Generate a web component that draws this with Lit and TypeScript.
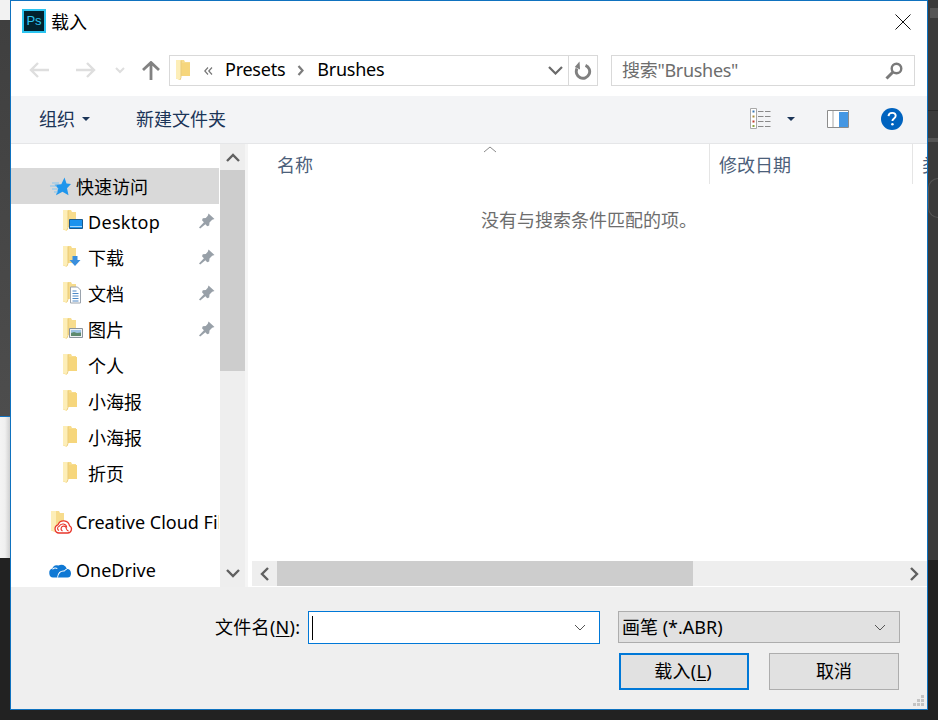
import { LitElement, html, css, svg } from "lit";
import { customElement } from "lit/decorators.js";

const folder = () => html`<svg class="folder" width="15" height="22" viewBox="0 0 15 22">
  <path d="M0 1h8l1 2h5v14H4v4l-4-1.500z" fill="#f7dc8d"/>
  <path d="M0 1h5v17l-1 3-4-1.500z" fill="#fdeeb8"/>
  <path d="M5 1.500v17l-1 2.500" fill="none" stroke="#e4c268" stroke-width=".8"/>
  <path d="M6 4h8v13H6z" fill="#f6d67c"/>
</svg>`;

const overlays: Record<string, ReturnType<typeof svg>> = {
  desktop: svg`<path d="M6.500 10.500h13v9h-13z" fill="#1b93ee" stroke="#1c5a8c" stroke-width="1"/><path d="M7 17.500h12" stroke="#a6d8fa"/>`,
  down: svg`<path d="M9.500 11h5v4h3l-5.500 6-5.500-6h3z" fill="#3a8fdd"/>`,
  doc: svg`<path d="M7.500 6h7l3 3v13h-10z" fill="#fff" stroke="#9aa3ad"/><path d="M9.500 10h4M9.500 12.500h6M9.500 15h6M9.500 17.500h6M9.500 20h6" stroke="#3a7cc0" stroke-width=".9"/>`,
  pic: svg`<path d="M6.500 11.500h13v9h-13z" fill="#eef1f4" stroke="#8a939c"/><path d="M8 13h10v3H8z" fill="#9cc3e4"/><path d="M8 19v-3l3-1 3 1 4-.500v3.500z" fill="#5d8a6e"/>`,
};

const sideFolder = (kind?: string) => html`<svg class="folder" width="21" height="23" viewBox="0 0 21 23">
  <path d="M0 1h8l1 2h4v15H4v4l-4-1.500z" fill="#f7dc8d"/>
  <path d="M0 1h5v17l-1 3.500-4-1.500z" fill="#fdeeb8"/>
  <path d="M5 1.500v17l-1 2.500" fill="none" stroke="#e4c268" stroke-width=".8"/>
  ${kind ? overlays[kind] : svg`<path d="M6 4h8v14H6z" fill="#f6d67c"/>`}
</svg>`;

const pin = html`<svg class="pin" width="16" height="16" viewBox="0 0 16 16"><path d="M9.500.500l6 5.500-2.300.800-2.700 2.700-.300 3-2 .800-1.800-2.100L1.200 15.500 0 14.500 4.900 9.200 3 7.300l.800-2 3-.300 2-2.200z" fill="#98a0a8"/></svg>`;

const chevUp = html`<svg width="14" height="9" viewBox="0 0 14 9"><path d="M1 8l6-6 6 6" fill="none" stroke="#606060" stroke-width="2.400"/></svg>`;
const chevDown = html`<svg width="14" height="9" viewBox="0 0 14 9"><path d="M1 1l6 6 6-6" fill="none" stroke="#606060" stroke-width="2.400"/></svg>`;
const chevLeft = html`<svg width="9" height="14" viewBox="0 0 9 14"><path d="M8 1L2 7l6 6" fill="none" stroke="#606060" stroke-width="2.400"/></svg>`;
const chevRight = html`<svg width="9" height="14" viewBox="0 0 9 14"><path d="M1 1l6 6-6 6" fill="none" stroke="#606060" stroke-width="2.400"/></svg>`;
const thinChev = html`<svg width="12" height="7" viewBox="0 0 12 7"><path d="M1 1l5 5 5-5" fill="none" stroke="#555" stroke-width="1"/></svg>`;

@customElement("app-root")
export class AppRoot extends LitElement {
  static styles = css`
    :host {
      display: block;
      position: relative;
      width: 938px;
      height: 720px;
      overflow: hidden;
      background: #222;
      font-family: "Noto Sans", "Noto Sans CJK SC", sans-serif;
      font-size: 18px;
      line-height: 24px;
      color: #000;
    }
    .strip { position: absolute; }
    .s-white { left: 0; top: 0; width: 10px; height: 20px; background: #f2f2f2; }
    .s-dark { left: 0; top: 20px; width: 10px; height: 396px; background: linear-gradient(#3f3f3f, #4d4d4d); border-bottom: 1px solid #1273c2; }
    .s-light { left: 0; top: 417px; width: 10px; height: 141px; background: linear-gradient(90deg, #f4f4f4, #f0f0f0 50%, #cfcfcf); }
    .s-right { left: 928px; top: 0; width: 10px; height: 560px; background: #3b3b3b; }
    .s-r1 { left: 930px; top: 8px; width: 8px; height: 10px; background: #565656; }
    .s-r2 { left: 928px; top: 138px; width: 10px; height: 4px; background: #555; }
    .s-r3 { left: 928px; top: 110px; width: 10px; height: 1px; background: #2a2a2a; }
    .s-r4 { left: 928px; top: 178px; width: 10px; height: 40px; border-radius: 20px 0 0 20px; border: 1px solid #555; box-sizing: border-box; border-right: 0; }
    .dialog {
      position: relative;
      box-sizing: border-box;
      margin-left: 10px;
      width: 918px;
      height: 710px;
      border: 1px solid #0f72bf;
      background: #fff;
      display: flex;
      flex-direction: column;
    }
    .title {
      height: 36px;
      display: flex;
      align-items: center;
      padding: 4px 0 0 11px;
      box-sizing: border-box;
      flex: none;
    }
    .ps {
      width: 24px;
      height: 24px;
      box-sizing: border-box;
      border: 2px solid #2cc4f0;
      background: #02222e;
      color: #2cc4f0;
      font: 13px/20px "Liberation Sans", sans-serif;
      text-align: center;
      margin-right: 5px;
    }
    .title-text { flex: 1; line-height: 24px; padding-top: 2px; }
    .close { margin: 2px 16px 0 0; display: block; }
    .nav {
      height: 59px;
      flex: none;
      box-sizing: border-box;
      padding-top: 18px;
      display: flex;
      align-items: flex-start;
    }
    .nav-btns { width: 158px; height: 30px; display: flex; align-items: center; flex: none; box-sizing: border-box; }
    .nav-btns svg { display: block; }
    .n1 { margin-left: 18px; }
    .n2 { margin-left: 27px; }
    .n3 { margin-left: 19px; }
    .n4 { margin-left: 17px; }
    .addr {
      width: 429px;
      height: 31px;
      box-sizing: border-box;
      border: 1px solid #d9d9d9;
      display: flex;
      align-items: center;
      flex: none;
    }
    .addr .folder { margin-left: 6px; margin-top: -2px; flex: none; }
    .laquo { margin-left: 13px; width: 21px; display: block; }
    .crumb { line-height: 24px; padding-bottom: 4px; letter-spacing: -.25px; }
    .sep { margin: 0 12px 0 12px; display: block; }
    .spacer { flex: 1; }
    .addr .dd { margin-right: 5px; display: block; }
    .refresh { width: 28px; height: 29px; border-left: 1px solid #d9d9d9; display: flex; align-items: center; justify-content: center; flex: none; }
    .search {
      margin-left: 13px;
      width: 304px;
      height: 31px;
      box-sizing: border-box;
      border: 1px solid #d9d9d9;
      display: flex;
      align-items: center;
      padding: 0 10px;
      color: #6d6d6d;
      flex: none;
    }
    .search-text { letter-spacing: -.3px; padding-bottom: 2px; }
    .toolbar {
      height: 48px;
      flex: none;
      box-sizing: border-box;
      background: #f3f4f6;
      border-bottom: 1px solid #e5e6e8;
      display: flex;
      align-items: center;
      padding: 0 24px 2px 28px;
      color: #1b3558;
    }
    .toolbar svg { display: block; flex: none; }
    .org-caret { margin: 0 46px 0 7px; }
    .view-caret { margin: 0 32px 0 16px; }
    .help { margin-left: 32px; }
    .body { flex: 1; min-height: 0; display: flex; overflow: hidden; }
    .side { width: 208px; flex: none; overflow: hidden; padding-top: 24px; box-sizing: border-box; }
    .row { height: 36px; display: flex; align-items: center; white-space: nowrap; position: relative; }
    .row.top { padding-left: 39px; }
    .row.top .ic { width: 26px; flex: none; display: block; }
    .row.sub { padding-left: 52px; }
    .row.sub .folder { flex: none; margin-top: -3px; width: 21px; margin-right: 4px; }
    .row.sel { background: #d9d9d9; }
    .sel-text { padding-top: 2px; }
    .latin { letter-spacing: .3px; }
    .row .pin { position: absolute; left: 188px; top: 9px; }
    .gap { height: 12px; }
    .vbar { width: 25px; margin-left: 1px; flex: none; background: #eee; display: flex; flex-direction: column; }
    .arrow { display: flex; align-items: center; justify-content: center; flex: none; }
    .vbar .arrow { height: 26px; }
    .vbar .thumb { height: 201px; background: #cdcdcd; flex: none; }
    .vbar .fill { flex: 1; }
    .vbar .arrow.down { height: 27px; }
    .side-rule { width: 3px; background: #f5f5f5; flex: none; }
    .main { flex: 1; min-width: 0; display: flex; flex-direction: column; position: relative; padding-left: 4px; }
    .head { height: 40px; display: flex; color: #4c607a; flex: none; position: relative; }
    .col { box-sizing: border-box; height: 40px; display: flex; align-items: center; padding: 2px 0 0 9px; overflow: hidden; white-space: nowrap; flex: none; }
    .col.name { width: 458px; padding-left: 25px; border-right: 1px solid #e5e5e5; position: relative; }
    .col.date { width: 203px; border-right: 1px solid #e5e5e5; }
    .col.type { flex: 1; min-width: 0; }
    .sort { position: absolute; left: 231px; top: 2px; display: block; }
    .empty { flex: 1; text-align: center; color: #6d6d6d; padding-top: 24px; padding-right: 1px; }
    .hbar { height: 25px; margin: 0 0 1px 0; flex: none; background: #eee; display: flex; align-items: stretch; }
    .hbar .arrow { width: 25px; }
    .hbar .thumb { width: 416px; background: #cdcdcd; flex: none; }
    .hbar .fill { flex: 1; }
    .footer {
      height: 122px;
      flex: none;
      background: #efefef;
      position: relative;
      box-sizing: border-box;
      padding-top: 24px;
    }
    .f-row { display: flex; }
    .f1 { padding-left: 204px; height: 33px; }
    .f-label { width: 93px; line-height: 33px; flex: none; white-space: nowrap; letter-spacing: .3px; }
    u { text-underline-offset: 2px; }
    .input {
      width: 292px;
      height: 33px;
      box-sizing: border-box;
      border: 1px solid #0078d7;
      background: #fff;
      display: flex;
      align-items: center;
      padding: 0 13px 0 3px;
      flex: none;
    }
    .cursor { width: 1px; height: 24px; background: #000; }
    .select {
      margin-left: 18px;
      width: 282px;
      height: 32px;
      box-sizing: border-box;
      border: 1px solid #adadad;
      background: #e1e1e1;
      display: flex;
      align-items: center;
      padding: 0 13px 0 3px;
      flex: none;
    }
    .f2 { margin-top: 9px; padding-left: 608px; gap: 20px; }
    .btn {
      width: 130px;
      height: 37px;
      box-sizing: border-box;
      border: 1px solid #adadad;
      background: #e1e1e1;
      text-align: center;
      line-height: 35px;
      color: #000;
    }
    .btn.primary { border: 2px solid #0078d7; line-height: 33px; letter-spacing: .3px; padding-right: 2px; }
    .grip { position: absolute; right: 2px; bottom: 2px; display: block; }
  `;

  render() {
    const subs: [string, string?, boolean?][] = [
      ["Desktop", "desktop", true],
      ["下载", "down", true],
      ["文档", "doc", true],
      ["图片", "pic", true],
      ["个人"],
      ["小海报"],
      ["小海报"],
      ["折页"],
    ];
    return html`
      <div class="strip s-white"></div>
      <div class="strip s-dark"></div>
      <div class="strip s-light"></div>
      <div class="strip s-right"></div>
      <div class="strip s-r1"></div>
      <div class="strip s-r2"></div>
      <div class="strip s-r3"></div>
      <div class="strip s-r4"></div>
      <div class="dialog">
        <div class="title">
          <div class="ps">Ps</div>
          <div class="title-text">载入</div>
          <svg class="close" width="16" height="16" viewBox="0 0 16 16"><path d="M.500.500l15 15M15.500.500l-15 15" stroke="#111" stroke-width="1" fill="none"/></svg>
        </div>
        <div class="nav">
          <div class="nav-btns">
            <svg class="n1" width="20" height="16" viewBox="0 0 20 16"><path d="M9 1L2 8l7 7M2 8h18" fill="none" stroke="#dedede" stroke-width="2.400"/></svg>
            <svg class="n2" width="20" height="16" viewBox="0 0 20 16"><path d="M11 1l7 7-7 7M18 8H0" fill="none" stroke="#dedede" stroke-width="2.400"/></svg>
            <svg class="n3" width="10" height="7" viewBox="0 0 10 7"><path d="M1 1l4 4 4-4" fill="none" stroke="#dedede" stroke-width="2"/></svg>
            <svg class="n4" width="18" height="19" viewBox="0 0 18 19"><path d="M1 9l8-7.500L17 9M9 2v17" fill="none" stroke="#828282" stroke-width="2.800"/></svg>
          </div>
          <div class="addr">
            ${folder()}
            <svg class="laquo" width="21" height="8" viewBox="0 0 21 8"><path d="M4 .500L.800 4 4 7.500M8 .500L4.800 4 8 7.500" fill="none" stroke="#777" stroke-width="1.200"/></svg>
            <span class="crumb">Presets</span>
            <svg class="sep" width="8" height="11" viewBox="0 0 8 11"><path d="M1.500 1l4 4.500-4 4.500" fill="none" stroke="#7c7c7c" stroke-width="2.200"/></svg>
            <span class="crumb">Brushes</span>
            <div class="spacer"></div>
            <svg class="dd" width="15" height="9" viewBox="0 0 15 9"><path d="M1 1l6.500 6.500L14 1" fill="none" stroke="#6a6a6a" stroke-width="2.200"/></svg>
            <div class="refresh">
              <svg width="18" height="19" viewBox="0 0 18 19"><path d="M11.500 4.300A6.700 6.700 0 1 1 3 7.500" fill="none" stroke="#808080" stroke-width="2.900"/><path d="M5.500 .500l.500 8L.800 6z" fill="#808080"/></svg>
            </div>
          </div>
          <div class="search">
            <span class="search-text">搜索"Brushes"</span>
            <div class="spacer"></div>
            <svg width="18" height="18" viewBox="0 0 18 18" style="margin-right:1px"><circle cx="11.500" cy="6.500" r="4.800" fill="none" stroke="#7a7a7a" stroke-width="2.400"/><path d="M8 10l-6.500 6.500" stroke="#7a7a7a" stroke-width="3"/></svg>
          </div>
        </div>
        <div class="toolbar">
          <span>组织</span>
          <svg class="org-caret" width="8" height="4" viewBox="0 0 8 4"><path d="M0 0h8L4 4z" fill="#1b3558"/></svg>
          <span>新建文件夹</span>
          <div class="spacer"></div>
          <svg width="21" height="21" viewBox="0 0 21 21">
            <path d="M.500.500h6v20h-6z" fill="#fff" stroke="#a9a9a9"/>
            <path d="M2.500 2.500h2v2h-2z" fill="#3978b5"/><path d="M2.500 7.500h2v2h-2z" fill="#a98c3a"/><path d="M2.500 12.500h2v2h-2z" fill="#c0392b"/><path d="M2.500 17h2v2h-2z" fill="#8aa63f"/>
            <path d="M8 3.500h13M8 8.500h13M8 13.500h13M8 18.500h13" stroke="#8a8a8a" stroke-dasharray="5.500 1.500"/>
          </svg>
          <svg class="view-caret" width="8" height="4" viewBox="0 0 8 4"><path d="M0 0h8L4 4z" fill="#1b3558"/></svg>
          <svg width="22" height="18" viewBox="0 0 22 18">
            <path d="M.500.500h21v17H.500z" fill="#fff" stroke="#8c8c8c"/>
            <path d="M6 1v16" stroke="#a8a8a8"/>
            <path d="M12 2h9v15h-9z" fill="#4597e3"/>
          </svg>
          <svg class="help" width="22" height="22" viewBox="0 0 22 22">
            <circle cx="11" cy="11" r="11" fill="#0063bf"/>
            <path d="M7.500 8.200c.2-2.100 1.700-3.300 3.700-3.300 2.100 0 3.500 1.200 3.500 2.900 0 2.700-3.300 2.600-3.300 5.200" fill="none" stroke="#fff" stroke-width="1.900"/>
            <circle cx="11.400" cy="16.200" r="1.300" fill="#fff"/>
          </svg>
        </div>
        <div class="body">
          <div class="side">
            <div class="row top sel">
              <svg class="ic" width="26" height="20" viewBox="0 0 26 20">
                <path d="M14.500 1.500l2 6 4.500.5-4 4.300 1.500 7-6-3.500-6.500 3.500 2.300-6.800-3.800-3.700 6.800-.5z" fill="#2096ec"/>
                <path d="M2 7h7M0 10h7M2 13h6M4 16h4" stroke="#86c6f0" stroke-width="1.200"/>
              </svg>
              <span class="sel-text">快速访问</span>
            </div>
            ${subs.map(
              ([t, k, p]) => html`<div class="row sub">${sideFolder(k)}<span class=${t === "Desktop" ? "latin" : ""}>${t}</span>${p ? pin : ""}</div>`
            )}
            <div class="gap"></div>
            <div class="row top">
              <svg class="ic" width="26" height="24" viewBox="0 0 26 24">
                <path d="M1 1h8l1 2h4v15H5v4l-4-1.500z" fill="#f7dc8d"/>
                <path d="M1 1h5v17l-1 3.500-4-1.500z" fill="#fdeeb8"/>
                <path d="M9 23h8.500a3.900 3.900 0 0 0 2-7.300 6 6 0 0 0-11.500-.9 4.200 4.200 0 0 0 1 8.200z" fill="#fff" stroke="#e8372c" stroke-width="1.300"/>
                <path d="M9 20.500a2.200 2.200 0 0 1 .2-4.200 4 4 0 0 1 7.600 1.200M12.500 21a2.600 2.600 0 1 1 3.800-2.400c.5 1.500 1 2.400 2.400 2.400" fill="none" stroke="#e8372c" stroke-width="1.100"/>
              </svg>
              <span>Creative Cloud Files</span>
            </div>
            <div class="gap"></div>
            <div class="row top">
              <svg class="ic" width="28" height="18" viewBox="0 0 28 18" style="margin-left:-2px;width:28px">
                <g transform="translate(0,-2) scale(1,1.2)">
                  <path d="M5 15.500a3.800 3.800 0 0 1-.8-7.500 5 5 0 0 1 6.300-2.500 6.200 6.200 0 0 1 8.500 2.800 3.700 3.700 0 0 1 4 3.600 3.600 3.600 0 0 1-3.500 3.600z" fill="#0f78d4"/>
                  <path d="M4.500 8.500a5 5 0 0 1 4.800-.500M9.500 15.500c.3-3.500 3-6 6.800-5.500a6 6 0 0 1 2.500-1.700" fill="none" stroke="#fff" stroke-width=".9"/>
                </g>
              </svg>
              <span>OneDrive</span>
            </div>
          </div>
          <div class="vbar">
            <div class="arrow">${chevUp}</div>
            <div class="thumb"></div>
            <div class="fill"></div>
            <div class="arrow down">${chevDown}</div>
          </div>
          <div class="side-rule"></div>
          <div class="main">
            <div class="head">
              <div class="col name">
                <span>名称</span>
                <svg class="sort" width="14" height="7" viewBox="0 0 14 7"><path d="M1 6l6-5 6 5" fill="none" stroke="#8a8a8a"/></svg>
              </div>
              <div class="col date">修改日期</div>
              <div class="col type">类型</div>
            </div>
            <div class="empty">没有与搜索条件匹配的项。</div>
            <div class="hbar">
              <div class="arrow">${chevLeft}</div>
              <div class="thumb"></div>
              <div class="fill"></div>
              <div class="arrow">${chevRight}</div>
            </div>
          </div>
        </div>
        <div class="footer">
          <div class="f-row f1">
            <div class="f-label">文件名(<u>N</u>):</div>
            <div class="input"><div class="cursor"></div><div class="spacer"></div>${thinChev}</div>
            <div class="select"><span>画笔 (*.ABR)</span><div class="spacer"></div>${thinChev}</div>
          </div>
          <div class="f-row f2">
            <div class="btn primary">载入(<u>L</u>)</div>
            <div class="btn">取消</div>
          </div>
          <svg class="grip" width="12" height="12" viewBox="0 0 12 12" fill="#c4c4c4">
            <rect x="8" y="0" width="3" height="3"/><rect x="4" y="4" width="3" height="3"/><rect x="8" y="4" width="3" height="3"/>
            <rect x="0" y="8" width="3" height="3"/><rect x="4" y="8" width="3" height="3"/><rect x="8" y="8" width="3" height="3"/>
          </svg>
        </div>
      </div>
    `;
  }
}
